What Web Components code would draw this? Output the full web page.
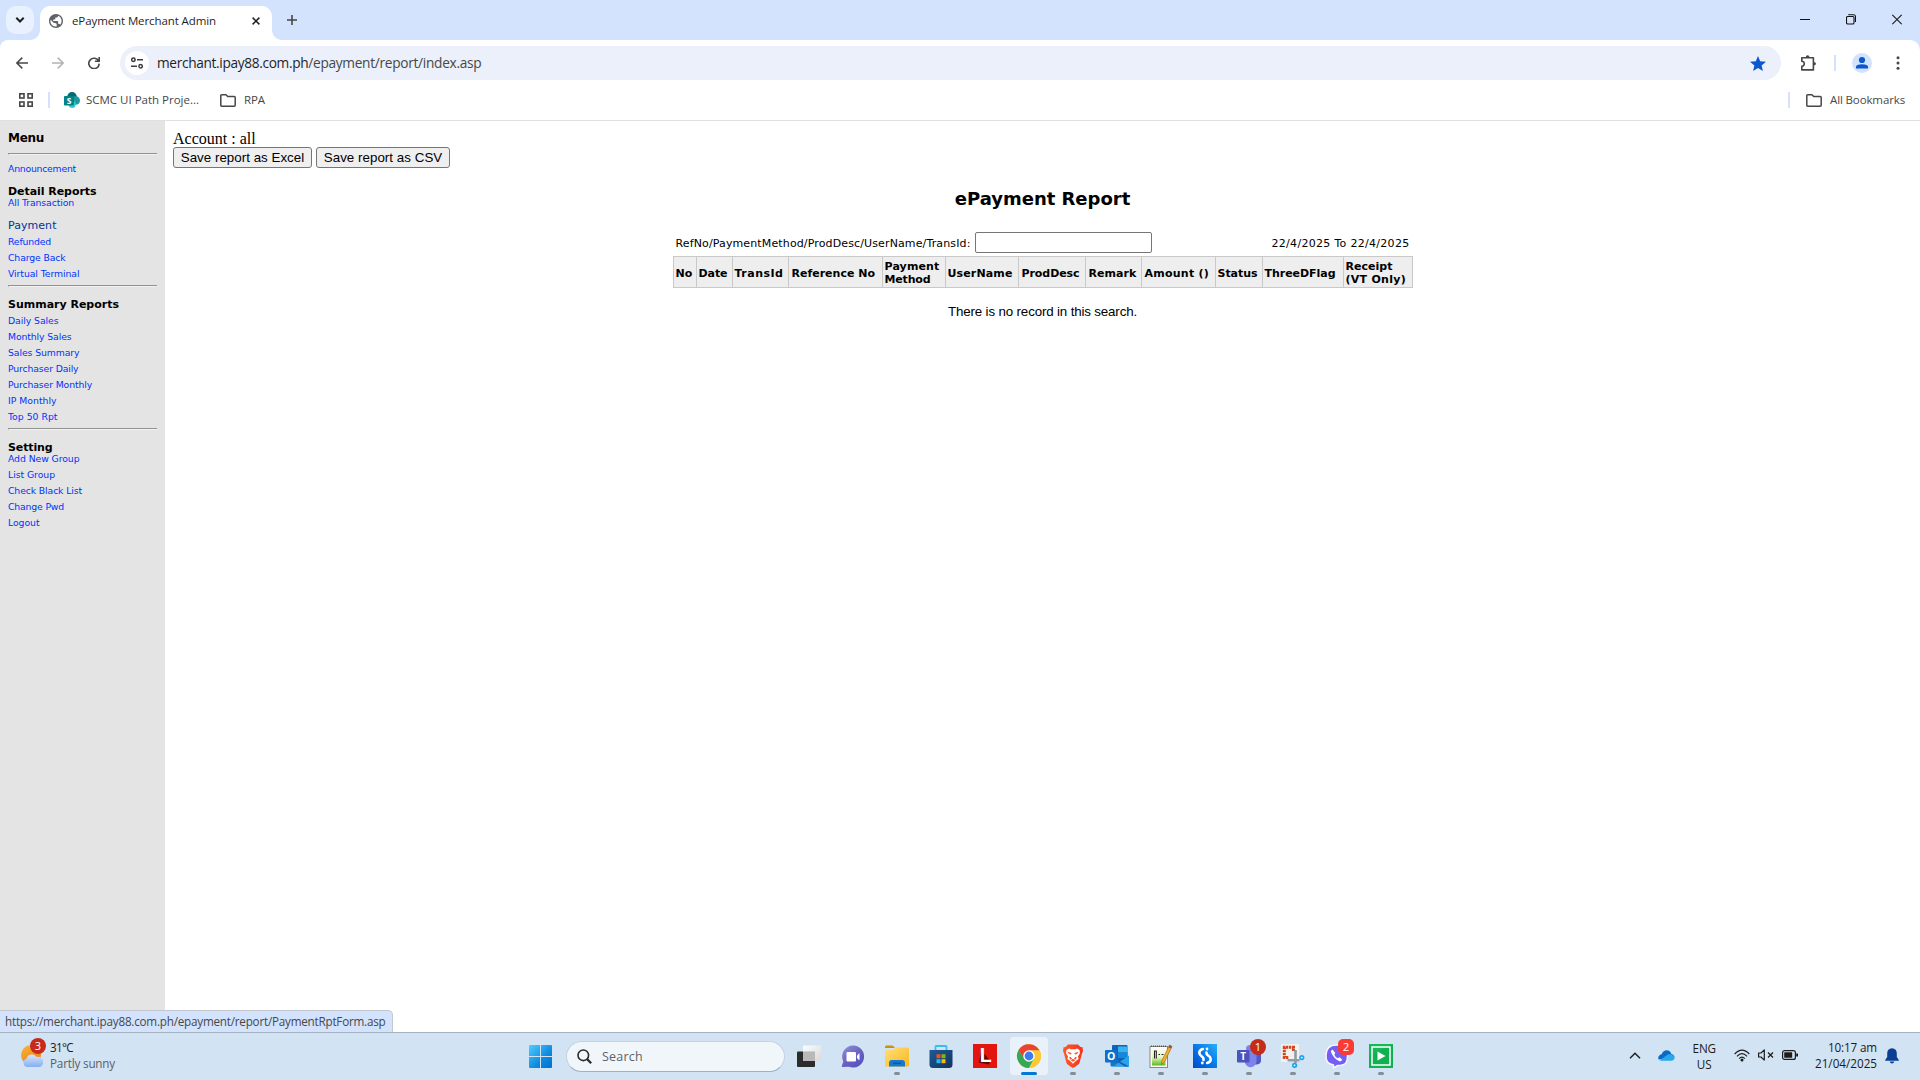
<!DOCTYPE html>
<html lang="en">
<head>
<meta charset="utf-8">
<title>ePayment Merchant Admin</title>
<style>
html,body{margin:0;height:100%;overflow:hidden;background:#fff}
</style>
</head>
<body>
<desktop-screen></desktop-screen>
<script>
// Small factory: registers an element whose shadow root is cloned from css + markup
function define(name, css, html) {
  const tpl = document.createElement('template');
  tpl.innerHTML = `<style>*{box-sizing:border-box}svg{display:block;flex:none}${css}</style>${html}`;
  customElements.define(name, class extends HTMLElement {
    constructor() {
      super();
      this.attachShadow({ mode: 'open' }).append(tpl.content.cloneNode(true));
    }
  });
}

define('desktop-screen',
`:host{display:flex;flex-direction:column;width:1920px;height:1080px;position:relative;overflow:hidden;font-family:"Open Sans","Noto Sans",sans-serif}
 .page{flex:1;display:flex;min-height:0}
 link-status{position:absolute;left:0;bottom:48px}`,
`<tab-strip></tab-strip><browser-toolbar></browser-toolbar><bookmarks-bar></bookmarks-bar>
 <div class="page"><side-menu></side-menu><report-page></report-page></div>
 <link-status></link-status>
 <task-bar></task-bar>`);

define('tab-strip',
`:host{display:flex;height:40px;background:#d3e3fd;padding:6px 0 0 6px;color:#1f1f1f}
 .search{width:28px;height:28px;border-radius:10px;background:#e9f1fe;display:flex;align-items:center;justify-content:center}
 .tab{position:relative;margin-left:6px;width:232px;height:34px;background:#fff;border-radius:10px 10px 0 0;display:flex;align-items:center;padding:0 0 5px 9px;font-size:11.500px}
 .tab::before,.tab::after{content:"";position:absolute;bottom:0;width:10px;height:10px}
 .tab::before{left:-10px;background:radial-gradient(circle at 0 0,transparent 9.6px,#fff 10.2px)}
 .tab::after{right:-10px;background:radial-gradient(circle at 100% 0,transparent 9.6px,#fff 10.2px)}
 .tab fit-text{margin:0 0 0 9px}
 .x{margin:0 0 0 36px}
 .plus{margin:9px 0 0 15px}
 .win{margin-left:auto;display:flex;padding:8px 18px 0 0;gap:36px}`,
`<div class="search"><svg width="10" height="8" viewBox="0 0 10 8"><path d="M1.3 1.8 5 5.5 8.7 1.8" fill="none" stroke="#1f1f1f" stroke-width="2"/></svg></div>
 <div class="tab"><svg width="14" height="14" viewBox="2 2 20 20"><path fill="#5f6368" d="M12 2C6.48 2 2 6.48 2 12s4.48 10 10 10 10-4.48 10-10S17.52 2 12 2zm-1 17.93c-3.95-.49-7-3.85-7-7.93 0-.62.08-1.21.21-1.79L9 15h1.500c2 0 2.500 1 2.500 2.500V20zm6.900-2.540c-.26-.81-1-1.390-1.900-1.390h-1v-3c0-.55-.45-1-1-1H8v-2h2c.55 0 1-.45 1-1V7h2c1.100 0 2-.9 2-2v-.41c2.930 1.190 5 4.060 5 7.410 0 2.080-.8 3.970-2.100 5.390z"/></svg>
 <fit-text w="144">ePayment Merchant Admin</fit-text>
 <svg class="x" width="8" height="8" viewBox="0 0 8 8"><path d="M.6.6 7.400 7.400M7.400.6.6 7.400" stroke="#1f1f1f" stroke-width="1.500"/></svg></div>
 <svg class="plus" width="10" height="10" viewBox="0 0 10 10"><path d="M5 0V10M0 5H10" stroke="#444746" stroke-width="1.600"/></svg>
 <div class="win">
 <svg width="10" height="11" viewBox="0 0 10 11"><path d="M0 5.500H10" stroke="#111"/></svg>
 <svg width="10" height="11" viewBox="0 0 10 11"><g fill="none" stroke="#111" stroke-width="1.100"><rect x=".5" y="2.500" width="7.500" height="7.500" rx="1.300"/><path d="M2.200.8H7.500Q9.500.8 9.500 2.800V8"/></g></svg>
 <svg width="10" height="11" viewBox="0 0 10 11"><path d="M.3.8 9.700 10.200M9.700.8.3 10.200" stroke="#111" stroke-width="1.100"/></svg></div>`);

define('browser-toolbar',
`:host{display:block;height:40px;background:#d3e3fd}
 .bar{height:40px;background:#fff;border-radius:8px 10px 0 0;display:flex;align-items:center;padding:6px 20px 0 16px}
 .nav{display:flex;gap:24px;align-items:center}
 .url{margin-left:20px;width:1662px;height:34px;border-radius:17px;background:#ebf0fa;display:flex;align-items:center;padding:0 16px 0 5px;font-size:13.700px;color:#1f1f1f}
 .url fit-text{margin-top:-1px}
 .site{width:24px;height:24px;border-radius:50%;background:#fff;display:flex;align-items:center;justify-content:center;margin-right:8px}
 .path{color:#474747}
 .star{margin-left:auto;margin-right:-1px;margin-top:1px}
 .ext{margin-left:19px}.sep{width:2px;height:16px;background:#d3e3fd;margin-left:17px}
 .user{width:20px;height:20px;border-radius:50%;background:#d3e3fd;margin-left:16px}
 .dots{margin-left:24px}`,
`<div class="bar"><div class="nav">
 <svg width="12" height="12" viewBox="0 0 12 12"><path d="M12 6H1M6.300.6.9 6 6.300 11.400" fill="none" stroke="#474747" stroke-width="1.500"/></svg>
 <svg width="12" height="12" viewBox="0 0 12 12"><path d="M0 6H11M5.700.6 11.100 6 5.700 11.400" fill="none" stroke="#b4b4b4" stroke-width="1.500"/></svg>
 <svg width="12" height="12" viewBox="0 0 12 12"><path d="M10.700 4.200A5.200 5.200 0 1 0 11.200 6.600M11.200 0V4.300H6.900" fill="none" stroke="#474747" stroke-width="1.600"/></svg></div>
 <div class="url"><div class="site"><svg width="12" height="12" viewBox="0 0 12 12"><g fill="none" stroke="#3c3c3c" stroke-width="1.500"><circle cx="2.400" cy="2.700" r="1.700"/><path d="M6 2.700H12M0 9.300H6"/><circle cx="9.600" cy="9.300" r="1.700"/></g></svg></div>
 <fit-text w="151.300">merchant.ipay88.com.ph</fit-text><fit-text w="173" class="path">/epayment/report/index.asp</fit-text>
 <svg class="star" width="16" height="15" viewBox="0 0 16 15"><path fill="#0b57d0" d="M8 0 10.200 5.200 16 5.700 11.600 9.400 12.900 15 8 12 3.100 15 4.400 9.400 0 5.700 5.800 5.200z"/></svg></div>
 <svg class="ext" width="17" height="17" viewBox="0 0 17 17"><path fill="none" stroke="#474747" stroke-width="1.600" stroke-linejoin="round" d="M1.800 2.800H13.400V14.900H1.800V11.300Q4.300 11 4.300 8.800T1.800 6.300z"/><path fill="#474747" d="M5.700 2.500Q5.800.2 7.600.2T9.500 2.500zM13.600 7Q16 7.100 16 8.800T13.600 10.600z"/></svg>
 <div class="sep"></div>
 <svg class="user" viewBox="0 0 20 20"><circle cx="10" cy="7" r="3.100" fill="#0b57d0"/><path d="M4 15.600V13.800Q4 11.300 10 11.300T16 13.800V15.600z" fill="#0b57d0"/></svg>
 <svg class="dots" width="4" height="14" viewBox="0 0 4 14"><g fill="#474747"><circle cx="2" cy="1.800" r="1.500"/><circle cx="2" cy="7" r="1.500"/><circle cx="2" cy="12.200" r="1.500"/></g></svg>
 </div>`);

const folder = `<svg width="16" height="13" viewBox="0 0 16 13"><path fill="none" stroke="#474747" stroke-width="1.500" stroke-linejoin="round" d="M.8 1.700Q.8.8 1.700.8H6L7.700 2.500H14.300Q15.200 2.500 15.200 3.400V11.300Q15.200 12.200 14.300 12.200H1.700Q.8 12.200.8 11.300z"/></svg>`;
define('bookmarks-bar',
`:host{display:flex;height:41px;background:#fff;border-bottom:1px solid #dfe0e1;align-items:center;padding:0 15px 0 19px;font-size:11.500px;color:#474747}
 fit-text{margin-top:-2px}
 .sep{width:2px;height:16px;background:#d3e3fd}
 .s1{margin:0 14px 0 15px}
 .a{margin-right:21px;margin-left:6px}.r{margin-left:8px}
 .s2{margin:0 16px 0 auto}.all{margin-left:8px}`,
`<svg width="14" height="14" viewBox="0 0 14 14"><g fill="none" stroke="#474747" stroke-width="1.600"><rect x=".8" y=".8" width="4.200" height="4.200"/><rect x="9" y=".8" width="4.200" height="4.200"/><rect x=".8" y="9" width="4.200" height="4.200"/><rect x="9" y="9" width="4.200" height="4.200"/></g></svg>
 <div class="sep s1"></div>
 <svg width="16" height="16" viewBox="0 0 16 16"><circle cx="8" cy="4.800" r="4.800" fill="#036c70"/><circle cx="11.700" cy="8.500" r="4.300" fill="#1a9ba1"/><circle cx="8.200" cy="12.300" r="3.600" fill="#37c6d0"/><rect y="4" width="10" height="9.500" rx=".8" fill="#038387"/><text x="5" y="11.800" font-family="Open Sans" font-weight="700" font-size="8.500" fill="#fff" text-anchor="middle">S</text></svg>
 <fit-text w="113" class="a">SCMC UI Path Proje...</fit-text>
 ${folder}<fit-text w="21" class="r">RPA</fit-text>
 <div class="sep s2"></div>${folder}<fit-text w="75" class="all">All Bookmarks</fit-text>`);

define('menu-link',
`:host{display:block;height:15px;line-height:15px;margin-top:1px;font-size:9.300px;color:#0033ff}
 :host([first]){margin-top:-4px}
 :host([spaced]){margin-top:6px}
 :host([current]){margin-top:8px;font-size:11px;color:#00339c}`,
`<slot></slot>`);
define('menu-heading',
`:host{display:block;box-sizing:border-box;height:15px;line-height:15px;margin-top:10px;font-size:11px;font-weight:700;color:#000}
 :host([near]){margin-top:8px}
 :host([top]){margin-top:9px;padding-top:1px;font-size:12px}`,
`<slot></slot>`);
define('menu-rule',
`:host{display:block;height:2px;margin-top:4px;width:149px;box-sizing:border-box;border-top:1px solid #929292;border-bottom:1px solid #f2f2f2;border-left:1px solid #929292}
 :host([top]){margin-top:8px}`, ``);
define('side-menu',
`:host{display:block;box-sizing:border-box;width:165px;background:#e4e4e4;padding-left:8px;font-family:"DejaVu Sans",sans-serif;overflow:hidden}`,
`<menu-heading top><fit-text w="36">Menu</fit-text></menu-heading>
 <menu-rule top></menu-rule>
 <menu-link spaced><fit-text w="68">Announcement</fit-text></menu-link>
 <menu-heading near><fit-text w="88.500">Detail Reports</fit-text></menu-heading>
 <menu-link first><fit-text w="66">All Transaction</fit-text></menu-link>
 <menu-link current><fit-text w="48.500">Payment</fit-text></menu-link>
 <menu-link><fit-text w="43">Refunded</fit-text></menu-link>
 <menu-link><fit-text w="57.500">Charge Back</fit-text></menu-link>
 <menu-link><fit-text w="71.500">Virtual Terminal</fit-text></menu-link>
 <menu-rule></menu-rule>
 <menu-heading><fit-text w="111">Summary Reports</fit-text></menu-heading>
 <menu-link><fit-text w="50.500">Daily Sales</fit-text></menu-link>
 <menu-link><fit-text w="63.500">Monthly Sales</fit-text></menu-link>
 <menu-link><fit-text w="71.500">Sales Summary</fit-text></menu-link>
 <menu-link><fit-text w="70.500">Purchaser Daily</fit-text></menu-link>
 <menu-link><fit-text w="84">Purchaser Monthly</fit-text></menu-link>
 <menu-link><fit-text w="48.500">IP Monthly</fit-text></menu-link>
 <menu-link><fit-text w="49.500">Top 50 Rpt</fit-text></menu-link>
 <menu-rule></menu-rule>
 <menu-heading><fit-text w="44.500">Setting</fit-text></menu-heading>
 <menu-link first><fit-text w="71.500">Add New Group</fit-text></menu-link>
 <menu-link><fit-text w="47">List Group</fit-text></menu-link>
 <menu-link><fit-text w="74">Check Black List</fit-text></menu-link>
 <menu-link><fit-text w="56">Change Pwd</fit-text></menu-link>
 <menu-link><fit-text w="31.500">Logout</fit-text></menu-link>`);

define('form-button',
`:host{display:inline-flex}
 button{width:100%;height:21px;border:1px solid #767676;border-radius:3px;background:#efefef;color:#000;font:13.333px "Liberation Sans",sans-serif;padding:0;line-height:18px}`,
`<button><slot></slot></button>`);

define('report-table',
`:host{display:grid;box-sizing:border-box;grid-template-columns:23px 36px 56px 94px 63px 73px 67px 56px 74px 47px 81px 69px;width:740px;height:32px;border:1px solid #c9c9c9;border-left:0;background:#eee;font-size:11px;font-weight:700;line-height:13px;margin-top:3px}
 div{border-left:1px solid #c9c9c9;padding:2px 0 0 2px;display:flex;flex-direction:column;justify-content:center;align-items:flex-start}
 div.w{padding-left:3px}
 div.two{padding-top:1px}`,
`<div><fit-text w="17">No</fit-text></div><div><fit-text w="29">Date</fit-text></div><div><fit-text w="49">TransId</fit-text></div>
 <div class="w"><fit-text w="83.500">Reference No</fit-text></div><div class="two"><fit-text w="55">Payment</fit-text><fit-text w="46">Method</fit-text></div>
 <div><fit-text w="65">UserName</fit-text></div><div class="w"><fit-text w="58">ProdDesc</fit-text></div><div class="w"><fit-text w="48">Remark</fit-text></div>
 <div class="w"><fit-text w="64.500">Amount ()</fit-text></div><div><fit-text w="40">Status</fit-text></div><div><fit-text w="71">ThreeDFlag</fit-text></div>
 <div class="two"><fit-text w="47">Receipt</fit-text><fit-text w="60.500">(VT Only)</fit-text></div>`);

define('report-page',
`:host{display:flex;flex-direction:column;flex:1;background:#fff;color:#000;padding:8px 8px 0;font-family:"DejaVu Sans",sans-serif}
 .acc{font:16px/18px "Liberation Serif",serif;height:18px;padding-top:1px}
 .buttons{display:flex;gap:4px}
 .report{align-self:center;display:flex;flex-direction:column;align-items:center;width:740px}
 h1{margin:20px 0 0;font-size:18px;line-height:22px;font-weight:700}
 .filter{display:flex;align-items:center;width:740px;height:21px;margin-top:22px;padding:0 3px;font-size:11px}
 .filter fit-text{padding-top:1px}
 input{width:177px;height:21px;margin:0 0 0 4px;border:1px solid #767676;border-radius:2px;padding:0;background:#fff}
 .date{margin-left:auto}
 p{margin:16px 0 0;font:13.333px/16px "Liberation Sans",sans-serif}`,
`<div class="acc">Account : all</div>
 <div class="buttons"><form-button style="width:139px"><fit-text w="123.500">Save report as Excel</fit-text></form-button><form-button style="width:134px"><fit-text w="118.500">Save report as CSV</fit-text></form-button></div>
 <div class="report"><h1><fit-text w="175.500">ePayment Report</fit-text></h1>
 <div class="filter"><fit-text w="295">RefNo/PaymentMethod/ProdDesc/UserName/TransId:</fit-text><input type="text" aria-label="Search"><fit-text class="date" w="138">22/4/2025 To 22/4/2025</fit-text></div>
 <report-table></report-table>
 <p><fit-text w="189">There is no record in this search.</fit-text></p></div>`);

define('link-status',
`:host{display:flex;align-items:center;box-sizing:border-box;width:393px;height:22px;background:#d3e3fd;border-top:1px solid #c3c8d0;border-right:1px solid #c3c8d0;border-radius:0 5px 0 0;padding:0 0 1px 5px;font-size:11.700px;color:#474747}`,
`<fit-text w="380.500">https://merchant.ipay88.com.ph/epayment/report/PaymentRptForm.asp</fit-text>`);

// A taskbar button: 44px slot holding a 24px icon and an optional running indicator
define('task-icon',
`:host{display:flex;width:44px;height:47px;flex:none;align-items:center;justify-content:center;position:relative}
 .box{width:38px;height:38px;border-radius:4px;display:flex;align-items:center;justify-content:center;margin-top:-1px}
 ::slotted(svg){margin-top:-1px}
 :host([active]) .box{background:#e9f1fa;box-shadow:0 0 0 .5px #dbe4ee}
 :host([running])::after,:host([active])::after{content:"";position:absolute;bottom:5px;left:19px;width:6px;height:3px;border-radius:2px;background:#868d95}
 :host([active])::after{left:14px;width:16px;background:#0078d4}`,
`<div class="box"><slot></slot></div>`);

define('task-bar',
`:host{display:flex;box-sizing:border-box;height:48px;border-top:1px solid #a5b2c2;background:#d2e3f3;color:#1b1b1b;font-size:11.700px}
 .weather{width:529px;display:flex;padding:5px 0 0 20px;gap:4px}
 .wt{display:flex;flex-direction:column;align-items:flex-start;padding-top:1px;line-height:16px}
 .wt .d{color:#5a6066}
 .start{margin-top:12px}
 .search{margin:8px 0 0 14px;width:219px;height:31px;border-radius:16px;background:#f1f6fb;border:1px solid #c3d2e2;border-bottom-color:#9db0c4;display:flex;align-items:center;padding-left:10px;gap:10px;font-size:12.500px;color:#5e6266}
 .search fit-text{margin-top:-1px}
 .apps{display:flex;margin-left:-10px}
 .tray{margin-left:auto;display:flex;align-items:center;padding:0 21px 3px 0}
 .col{display:flex;flex-direction:column;line-height:16px}
 .lang{align-items:center;margin:2px 18px 0 18px}.time{align-items:flex-end;margin:-1px 8px 0 17px;width:62px}
 svg{overflow:visible}`,
`<div class="weather"><svg width="26" height="30" viewBox="0 0 26 30"><defs><linearGradient id="sun" x2=".6" y2="1"><stop stop-color="#f6b73a"/><stop offset="1" stop-color="#f07f1c"/></linearGradient><linearGradient id="cl" x2="0" y2="1"><stop stop-color="#d9e6fb"/><stop offset="1" stop-color="#85aef0"/></linearGradient></defs>
 <circle cx="11" cy="17" r="10" fill="url(#sun)"/><path d="M7 29a4.300 4.300 0 0 1-.5-8.300A5.700 5.700 0 0 1 16.800 19a4.800 4.800 0 0 1 6.200 4.600A4.500 4.500 0 0 1 19 29z" fill="url(#cl)"/><circle cx="18" cy="8" r="8" fill="#c42b1c"/><text x="18" y="12" font-size="11" text-anchor="middle" fill="#fff">3</text></svg>
 <div class="wt"><fit-text w="23">31°C</fit-text><fit-text class="d" w="65">Partly sunny</fit-text></div></div>
 <svg class="start" width="23" height="23" viewBox="0 0 23 23"><defs><linearGradient id="wn" x2="1" y2="1"><stop stop-color="#4fcdff"/><stop offset=".6" stop-color="#0f8ae0"/><stop offset="1" stop-color="#0070cf"/></linearGradient></defs><path fill="url(#wn)" d="M1 0H11V11H0V1Q0 0 1 0zM12 0H22Q23 0 23 1V11H12zM0 12H11V23H1Q0 23 0 22zM12 12H23V22Q23 23 22 23H12z"/></svg>
 <div class="search"><svg width="15" height="15" viewBox="0 0 15 15"><circle cx="6.300" cy="6.300" r="5.300" fill="none" stroke="#2b2b2b" stroke-width="1.600"/><path d="M10.100 10.100 14.200 14.200" stroke="#2b2b2b" stroke-width="2.200"/></svg><fit-text w="41">Search</fit-text></div>
 <div class="apps">
 <task-icon style="margin-left:12px"><svg width="24" height="24" viewBox="0 0 24 24"><defs><linearGradient id="tv" x2="1" y2="1"><stop stop-color="#fff"/><stop offset="1" stop-color="#d8d8d8"/></linearGradient></defs><rect y="7.500" width="18" height="15.500" rx="1" fill="#2b2b2b"/><rect x="6" y="1.500" width="18" height="15.500" rx="1" fill="url(#tv)" opacity=".92"/><path d="M6 7.500H18V17H6z" fill="#b9b9b9"/></svg></task-icon>
 <task-icon><svg width="24" height="24" viewBox="0 0 24 24"><defs><linearGradient id="ch" x1=".1" x2=".9" y2="1"><stop stop-color="#8a92d8"/><stop offset=".5" stop-color="#6c62c4"/><stop offset="1" stop-color="#4c51bd"/></linearGradient></defs><path d="M12 1.500A11 11 0 1 1 8 22.700L1.500 23Q.5 23 .8 22L2.300 17.500A11 11 0 0 1 12 1.500z" fill="url(#ch)"/><rect x="5.500" y="8" width="9.500" height="9.500" rx="1.200" fill="#fff"/><path d="M16 11.500 18.500 9V16.500L16 14z" fill="#fff"/></svg></task-icon>
 <task-icon running><svg width="24" height="24" viewBox="0 0 24 24"><defs><linearGradient id="fo" x2="1" y2="1"><stop stop-color="#ffe07a"/><stop offset="1" stop-color="#fbb71c"/></linearGradient></defs><path d="M0 3Q0 1.500 1.500 1.500H7Q8 1.500 8.700 2.500L10 4H0z" fill="#d08f0a"/><path d="M0 6H8L10.500 3.500H23Q24 3.500 24 4.500V21Q24 22.500 22.500 22.500H1.500Q0 22.500 0 21z" fill="url(#fo)"/><path d="M4 22.500V19Q4 16 7 16H17Q20 16 20 19V22.500z" fill="#1579cf"/><path d="M8 19.300H16" stroke="#0b5aa5" stroke-width="1.500"/></svg></task-icon>
 <task-icon><svg width="24" height="24" viewBox="0 0 24 24"><defs><linearGradient id="st" x2="1" y2="1"><stop stop-color="#1c5b96"/><stop offset="1" stop-color="#16325c"/></linearGradient></defs><path d="M6.500 7V2.700Q6.500 2 7.200 2H16.800Q17.500 2 17.500 2.700V7" fill="none" stroke="#38bdf0" stroke-width="1.800"/><path d="M.5 6H23.500V20.500Q23.500 24 20 24H4Q.5 24 .5 20.500z" fill="url(#st)"/><path fill="#f25022" d="M7.500 10.200h4v4h-4z"/><path fill="#7fba00" d="M12.500 10.200h4v4h-4z"/><path fill="#27b7f5" d="M7.500 15.200h4v4h-4z"/><path fill="#ffb900" d="M12.500 15.200h4v4h-4z"/></svg></task-icon>
 <task-icon><svg width="24" height="24" viewBox="0 0 24 24"><rect width="24" height="24" fill="#e2160e"/><path d="M8.500 6 6 18.500 16 20.500 17 17z" fill="#5d0703"/><text x="12.600" y="18.300" font-family="Liberation Sans" font-weight="700" font-size="19.500" text-anchor="middle" fill="#fff">L</text></svg></task-icon>
 <task-icon active><svg width="24" height="24" viewBox="0 0 48 48"><circle cx="24" cy="24" r="24" fill="#fcc934"/><path d="M24 24V13H45A24 24 0 0 0 3.200 12L14.500 31z" fill="#ea4335"/><path d="M24 24 14.500 29.500 3.200 12A24 24 0 0 0 24 48L34 30z" fill="#34a853"/><path d="M24 13H45.200A24 24 0 0 1 24 48L33.500 29.500z" fill="#fcc934"/><circle cx="24" cy="24" r="11.500" fill="#fff"/><circle cx="24" cy="24" r="8.800" fill="#3b7ded"/></svg></task-icon>
 <task-icon running><svg width="24" height="24" viewBox="0 0 24 24"><defs><linearGradient id="br" x2="1"><stop stop-color="#fb5a2a"/><stop offset="1" stop-color="#f8321e"/></linearGradient></defs><path d="M7 .5H17L19.500 3 21.500 3.200 22 7 21 9.500 18.500 19Q18 20.500 12 24 6 20.500 5.500 19L3 9.500 2 7 2.500 3.200 4.500 3z" fill="url(#br)"/><path d="M5.500 6 8 4.500 10 5.200H14L16 4.500 18.500 6 19 9 17 12.500 17.600 15 14.800 17 12 19.800 9.200 17 6.400 15 7 12.500 5 9z" fill="#fff"/><path d="M6.800 8.300 10.300 9.300 9.300 10.300zM17.200 8.300 13.700 9.300 14.700 10.300zM8.800 13 10.700 14.300 9.200 15.200zM15.200 13 13.300 14.300 14.800 15.200zM10.200 16.200 12 15.300 13.800 16.200 12 17.300z" fill="#fb4a26" stroke="#fb4a26" stroke-width=".7"/></svg></task-icon>
 <task-icon running><svg width="24" height="24" viewBox="0 0 24 24"><rect x="7" y="1" width="15.500" height="17" rx="1" fill="#0f62b5"/><path d="M13 2.500H22.500V8.500H13z" fill="#35b4f0"/><path d="M13 8.500H22.500V14H13z" fill="#1787dc"/><path d="M5.500 12 24 22.500H7Q5.500 22.500 5.500 21z" fill="#1b74c8"/><path d="M24 11.500V22.500H8z" fill="#2ba3ea"/><path d="M14 17 24 22.500H20L11 17z" fill="#1263b4"/><rect y="6" width="12.500" height="12.500" rx="1" fill="#0e6fc9"/><text x="6.200" y="16.100" font-weight="700" font-size="10.500" text-anchor="middle" fill="#fff">O</text></svg></task-icon>
 <task-icon running><svg width="24" height="24" viewBox="0 0 24 24"><defs><linearGradient id="np" x2="0" y2="1"><stop stop-color="#f4fbe6"/><stop offset=".45" stop-color="#e9f7c6"/><stop offset="1" stop-color="#5cb917"/></linearGradient></defs><rect x="1" y="2.500" width="17.500" height="21" fill="#fafafa" stroke="#8a8a7c"/><rect x="3" y="6" width="13.500" height="15.500" fill="url(#np)"/><path d="M2 2.200H18" stroke="#555" stroke-width="1.400" stroke-dasharray="1 1"/><path d="M5.500 14.500V7H7.300V14.500M9.500 10.500H11M12.500 10.500H14.500" stroke="#222" stroke-width="1.100" fill="none"/><path d="M20.500 1 23 2.500 15.500 18 12.500 20.500 13 16.500z" fill="#f2b230" stroke="#8a5a1c" stroke-width=".6"/><path d="M20.500 1 23 2.500 22 4.500 19.500 3.300z" fill="#9a4a50"/></svg></task-icon>
 <task-icon running><svg width="24" height="24" viewBox="0 0 24 24"><defs><linearGradient id="ui" y1="1" x2="1" y2="0"><stop stop-color="#0048cf"/><stop offset=".5" stop-color="#0878e6"/><stop offset="1" stop-color="#27b0fa"/></linearGradient></defs><rect width="24" height="24" fill="url(#ui)"/><g fill="none" stroke="#fff" stroke-width="2.600" stroke-linecap="round"><path d="M9.800 5Q6.300 6 6.300 8.800 6.300 11 8.700 12.300 10.800 13.500 10.500 16"/><path d="M14.200 19Q17.700 18 17.700 15.200 17.700 13 15.300 11.700 13.200 10.500 13.500 8.500"/></g><circle cx="14" cy="5" r="1.400" fill="#fff"/><circle cx="9.300" cy="19" r="1.400" fill="#fff"/></svg></task-icon>
 <task-icon running><svg width="24" height="24" viewBox="0 0 24 24"><circle cx="20.500" cy="6" r="3" fill="#5059c9"/><circle cx="13" cy="5" r="4" fill="#7b83eb"/><path d="M17 9H24V16.500Q24 20 20 20.500H16z" fill="#5059c9"/><path d="M7.500 9H19.500V16.500A6 6.500 0 0 1 7.500 17z" fill="#7b83eb"/><rect y="6" width="12.500" height="12.500" rx="1" fill="#4b53bc"/><text x="6.200" y="16" font-weight="700" font-size="10" text-anchor="middle" fill="#fff">T</text><circle cx="21" cy="3" r="8" fill="#c42b1c"/><text x="21" y="7" font-size="11" text-anchor="middle" fill="#fff">1</text></svg></task-icon>
 <task-icon running><svg width="24" height="24" viewBox="0 0 24 24"><rect width="18" height="18" rx="1" fill="#f1f1ef"/><path d="M12.500 7V3.200H3.300V13.500H8" fill="none" stroke="#d4431c" stroke-width="3" stroke-dasharray="2.400 .7"/><path d="M14.500 6V16.200H18.500M6.500 16.200H14.500V19" fill="none" stroke="#939ba2" stroke-width="2.600"/><circle cx="20.800" cy="13.600" r="2.600" fill="#1ba5ea"/><circle cx="13.600" cy="21.300" r="2.600" fill="#1ba5ea"/><circle cx="20.800" cy="13.600" r=".9" fill="#fff"/><circle cx="13.600" cy="21.300" r=".9" fill="#fff"/></svg></task-icon>
 <task-icon running><svg width="24" height="24" viewBox="0 0 24 24"><path d="M11.500 1C20 1 22.500 3.500 22.500 11.500S20 21.500 12.500 21.500L8.500 24V21C2.500 19.800 1 17.500 1 11.500S3 1 11.500 1z" fill="#7360f2" stroke="#f7f6fb" stroke-width="1.500"/><path d="M7.500 5.500Q5.500 6.500 6 8 8.500 14.500 14.500 17.300 16 17.800 17.300 15.700L14.500 13.300 12.800 14.300Q10 13 9.300 10.500L10.300 9z" fill="#fff"/><rect x="13" y="-5" width="16" height="16" rx="5" fill="#fa3a33"/><text x="21" y="7" font-size="11.500" text-anchor="middle" fill="#fff">2</text></svg></task-icon>
 <task-icon running><svg width="24" height="24" viewBox="0 0 24 24"><rect width="24" height="24" fill="#13b956"/><path d="M0 12 24 0V24H0z" fill="#10a94e" opacity=".5"/><rect x="3" y="3" width="18" height="18" fill="none" stroke="#fff" stroke-width="1.500"/><path d="M8.500 7.500 16.500 12 8.500 16.500z" fill="#fff"/></svg></task-icon>
 </div>
 <div class="tray">
 <svg width="12" height="7" viewBox="0 0 12 7"><path d="M1 6.300 6 1.300 11 6.300" fill="none" stroke="#222" stroke-width="1.500"/></svg>
 <svg style="margin-left:17px" width="17" height="11" viewBox="0 0 17 11"><path d="M.5 9.500Q-.8 5.500 3.800 4 5.300.3 8.700.3 12.300.4 13.300 4 16.800 4.500 16.300 8z" fill="#0a6ac4"/><path d="M2 10.300 8.700 5.300Q11.500 3.300 13.500 4.500 16.800 5 16.500 8 16 10.800 13.500 10.800H3Q2 10.800 2 10.300z" fill="#28a8ea"/></svg>
 <div class="col lang"><fit-text w="23.500">ENG</fit-text><fit-text w="15">US</fit-text></div>
 <svg width="16" height="13" viewBox="0 0 16 13"><g fill="none" stroke="#1b1b1b" stroke-width="1.200"><path d="M.7 5Q8-2.800 15.300 5M3 7.300Q8 2 13 7.300M5.200 9.600Q8 6.600 10.800 9.600"/></g><circle cx="8" cy="11" r="1.500" fill="#1b1b1b"/></svg>
 <svg style="margin-left:8px" width="16" height="12" viewBox="0 0 16 12"><path d="M.6 4H3L6.300.9V11.100L3 8H.6z" fill="none" stroke="#1b1b1b" stroke-width="1.200" stroke-linejoin="round"/><path d="M10 3.500 15 8.500M15 3.500 10 8.500" stroke="#1b1b1b" stroke-width="1.200"/></svg>
 <svg style="margin-left:8px" width="16" height="10" viewBox="0 0 16 10"><rect x=".6" y=".6" width="12.800" height="8.800" rx="2" fill="none" stroke="#1b1b1b" stroke-width="1.200"/><rect x="2.200" y="2.200" width="8" height="5.600" rx=".6" fill="#1b1b1b"/><path d="M14.200 3.500H16V6.500H14.200z" fill="#1b1b1b"/></svg>
 <div class="col time"><fit-text w="49">10:17 am</fit-text><fit-text w="62">21/04/2025</fit-text></div>
 <svg style="margin-top:2px" width="14" height="16" viewBox="0 0 14 16"><path d="M7 .3Q11.800.6 11.800 5.500V9L13.800 12V12.700H.2V12L2.200 9V5.500Q2.200.6 7 .3zM4.700 13.600H9.300Q8.800 15.600 7 15.600T4.700 13.600z" fill="#0a3f94"/></svg>
 </div>`);

// Spreads its text over a given width by adjusting the tracking
customElements.define('fit-text', class extends HTMLElement {
  constructor() {
    super();
    this.attachShadow({ mode: 'open' }).innerHTML =
      '<style>:host{display:inline-block;white-space:nowrap;flex:none}</style><slot></slot>';
  }
  connectedCallback() {
    const target = parseFloat(this.getAttribute('w'));
    const natural = this.getBoundingClientRect().width;
    this.style.letterSpacing = ((target - natural) / this.textContent.length) + 'px';
  }
});
</script>
</body>
</html>
